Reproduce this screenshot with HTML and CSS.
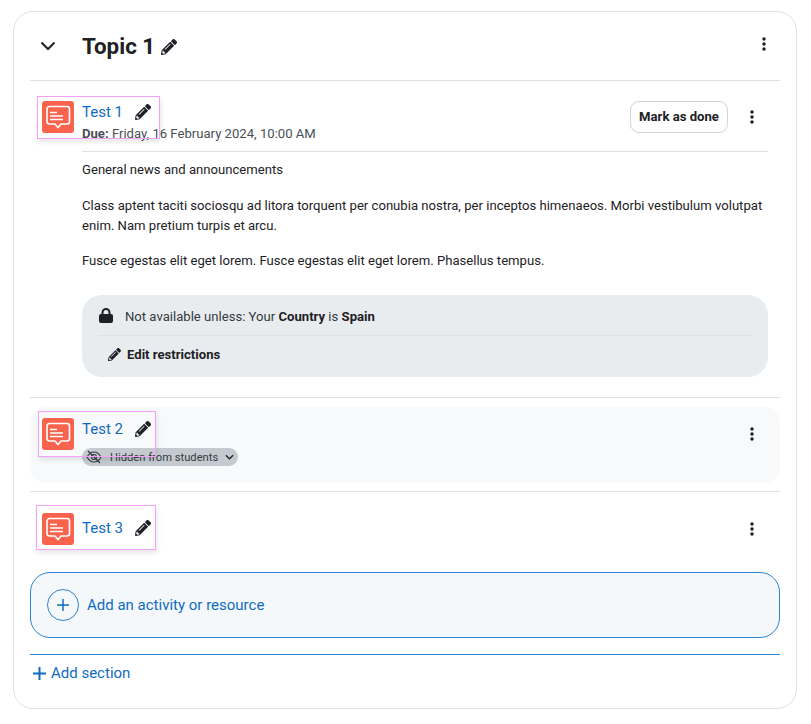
FILE: index.html
```html
<!DOCTYPE html>
<html lang="en">
<head>
<meta charset="utf-8">
<title>Topic 1</title>
<link rel="stylesheet" href="styles.css">
</head>
<body>
<svg class="defs" width="0" height="0" aria-hidden="true">
  <defs>
    <symbol id="pencil" viewBox="0 0 512 512"><path d="M497.9 142.1l-46.1 46.1c-4.7 4.7-12.3 4.7-17 0l-111-111c-4.7-4.7-4.7-12.3 0-17l46.1-46.1c18.7-18.7 49.1-18.7 67.900 0l60.100 60.100c18.800 18.700 18.800 49.100 0 67.900zM284.200 99.800L21.600 362.400.400 483.900c-2.900 16.400 11.400 30.600 27.800 27.800l121.500-21.300 262.600-262.600c4.700-4.700 4.700-12.300 0-17l-111-111c-4.800-4.700-12.400-4.700-17.100 0zM124.100 339.900c-5.500-5.500-5.500-14.300 0-19.800l154-154c5.500-5.500 14.300-5.500 19.800 0s5.500 14.300 0 19.800l-154 154c-5.500 5.500-14.300 5.500-19.800 0zM88 424h48v36.300l-64.500 11.300-31.100-31.100L51.700 376H88v48z"/></symbol>
    <symbol id="dots" viewBox="0 0 4 14"><circle cx="2" cy="2" r="1.75"/><circle cx="2" cy="7" r="1.75"/><circle cx="2" cy="12" r="1.75"/></symbol>
    <symbol id="forum" viewBox="0 0 32 32"><rect width="32" height="32" rx="3" fill="#f7634d"/><path d="M7.500 5.500h17.500a2.500 2.500 0 0 1 2.500 2.500v12.500a2.500 2.500 0 0 1-2.500 2.500h-6l-3 3.500-3-3.500H7.500A2.500 2.500 0 0 1 5 20.500V8a2.500 2.500 0 0 1 2.500-2.500z" fill="none" stroke="#fff" stroke-width="1.600"/><path d="M8 11.500h7M8 15h13M8 18.500h13" stroke="#fff" stroke-width="1.400" fill="none"/></symbol>
  </defs>
</svg>
<main class="card">
  <header class="section-head">
    <svg class="chevron" viewBox="0 0 16 10"><path d="M1.500 1.500 8 8l6.500-6.500" fill="none" stroke="#1d2125" stroke-width="2"/></svg>
    <h2 class="section-title">Topic 1</h2>
    <svg class="icon title-pencil"><use href="#pencil"/></svg>
    <button class="kebab head-kebab" aria-label="Section actions"><svg><use href="#dots"/></svg></button>
  </header>

  <section class="activity first">
    <div class="activity-top">
      <svg class="activity-icon"><use href="#forum"/></svg>
      <div class="activity-main">
        <div class="activity-name"><a href="#">Test 1</a><svg class="icon name-pencil"><use href="#pencil"/></svg></div>
        <p class="due"><b>Due:</b> Friday, 16 February 2024, 10:00 AM</p>
      </div>
      <button class="done">Mark as done</button>
      <button class="kebab" aria-label="Activity actions"><svg><use href="#dots"/></svg></button>
      <span class="highlight h1"></span>
    </div>
    <div class="description">
      <p>General news and announcements</p>
      <p>Class aptent taciti sociosqu ad litora torquent per conubia nostra, per inceptos himenaeos. Morbi vestibulum volutpat enim. Nam pretium turpis et arcu.</p>
      <p>Fusce egestas elit eget lorem. Fusce egestas elit eget lorem. Phasellus tempus.</p>
    </div>
    <div class="restrictions">
      <div class="restriction-line">
        <svg class="lock" viewBox="0 0 14 15"><path d="M3.500 6.500V4.500a3.500 3.500 0 0 1 7 0v2" fill="none" stroke="#1d2125" stroke-width="2"/><rect y="6" width="14" height="9" rx="2" fill="#1d2125"/></svg>
        <span>Not available unless: Your <b>Country</b> is <b>Spain</b></span>
      </div>
      <div class="restriction-edit"><svg class="icon edit-pencil"><use href="#pencil"/></svg><b>Edit restrictions</b></div>
    </div>
  </section>

  <section class="activity hidden-item">
    <div class="activity-top">
      <svg class="activity-icon"><use href="#forum"/></svg>
      <div class="activity-main">
        <div class="activity-name"><a href="#">Test 2</a><svg class="icon name-pencil"><use href="#pencil"/></svg></div>
        <span class="badge">
          <svg class="eye" viewBox="0 0 16 14"><path d="M1 7c2-3.500 4.500-5 7-5s5 1.500 7 5c-2 3.500-4.500 5-7 5S3 10.500 1 7z" fill="none" stroke="#343a40" stroke-width="1.100"/><circle cx="8" cy="7" r="2.500" fill="none" stroke="#343a40" stroke-width="1.100"/><path d="M2 1l12 12" stroke="#343a40" stroke-width="1.200"/></svg>
          <span class="badge-text">Hidden from students</span>
          <svg class="badge-caret" viewBox="0 0 10 6"><path d="M1 1l4 4 4-4" fill="none" stroke="#1d2125" stroke-width="1.500"/></svg>
        </span>
      </div>
      <button class="kebab" aria-label="Activity actions"><svg><use href="#dots"/></svg></button>
      <span class="highlight h2"></span>
    </div>
  </section>

  <section class="activity third">
    <div class="activity-top">
      <svg class="activity-icon"><use href="#forum"/></svg>
      <div class="activity-main">
        <div class="activity-name"><a href="#">Test 3</a><svg class="icon name-pencil"><use href="#pencil"/></svg></div>
      </div>
      <button class="kebab" aria-label="Activity actions"><svg><use href="#dots"/></svg></button>
      <span class="highlight h3"></span>
    </div>
  </section>

  <a class="add-activity" href="#">
    <span class="add-circle"><svg viewBox="0 0 12 12"><path d="M6 0v12M0 6h12" stroke="#0f6cbf" stroke-width="1.500"/></svg></span>
    <span>Add an activity or resource</span>
  </a>
  <a class="add-section" href="#"><svg viewBox="0 0 13 13"><path d="M6.500 0v13M0 6.500h13" stroke="#0f6cbf" stroke-width="2"/></svg><span>Add section</span></a>
</main>
</body>
</html>
```
FILE: styles.css
```css
* { box-sizing: border-box; }
html, body { margin: 0; background: #fff; }
body { padding: 11px 14px 15px 13px; font-family: Roboto, "Liberation Sans", sans-serif; font-size: 13.125px; line-height: 20px; color: #1d2125; }
.defs { position: absolute; }
.card { height: 698px; border: 1px solid #dee2e6; border-radius: 20px; padding: 0 16px; }
a { color: #0f6cbf; text-decoration: none; }
p { margin: 0; }
button { font-family: inherit; background: none; border: 0; padding: 0; color: inherit; }
.section-head { height: 69px; display: flex; align-items: center; border-bottom: 1px solid #dee2e6; }
.chevron { width: 16px; height: 10px; margin-left: 10px; flex: none; }
.section-title { margin: 0 0 0 26px; font-size: 22.400px; line-height: 30px; font-weight: 700; }
.icon { fill: #1d2125; flex: none; }
.title-pencil { width: 16px; height: 16px; margin-left: 6px; margin-top: 2px; }
.kebab { width: 24px; height: 24px; display: flex; align-items: center; justify-content: center; flex: none; }
.kebab svg { width: 4px; height: 14px; fill: #1d2125; }
.head-kebab { margin-left: auto; margin-right: 4px; margin-top: -4px; }
.activity-top { position: relative; display: flex; align-items: flex-start; }
.activity-icon { width: 32px; height: 32px; flex: none; margin-left: 12px; }
.activity-main { flex: 1; min-width: 0; margin-left: 8px; }
.activity-name { display: flex; align-items: center; font-size: 15px; line-height: 22px; }
.name-pencil { width: 16px; height: 16px; margin-left: 12px; }
.first { height: 317px; padding-top: 20px; border-bottom: 1px solid #dee2e6; }
.first .activity-top { padding-right: 16px; }
.first .kebab { margin-left: 12px; margin-top: 4px; }
.due { color: #495057; line-height: 18px; margin-top: 2px; padding-bottom: 6px; }
.done { width: 98px; height: 32px; padding-bottom: 2px; border: 1px solid #ced4da; border-radius: 9px; font-size: 13.125px; font-weight: 700; background: #fff; margin-left: 12px; }
.description { margin: 2px 12px 0 52px; padding-top: 8px; border-top: 1px solid #dee2e6; }
.description p { margin-bottom: 15px; }
.description p:first-child { margin-bottom: 16px; }
.restrictions { margin: 24px 12px 0 52px; height: 82px; background: #e9ecef; border-radius: 20px; padding: 0 16px; }
.restriction-line { display: flex; align-items: center; height: 41px; padding-top: 3px; border-bottom: 1px solid #dee2e6; color: #343a40; }
.lock { width: 14px; height: 15px; margin: -3px 12px 0 1px; flex: none; }
.restriction-line b { color: #1d2125; }
.restriction-edit { display: flex; align-items: center; height: 37px; margin-left: 10px; }
.edit-pencil { width: 13px; height: 13px; margin-right: 6px; }
.hidden-item { margin-top: 9px; height: 76px; background: #f8f9fa; border-radius: 16px; padding-top: 11px; }
.hidden-item .kebab { margin-right: 16px; margin-top: 4px; }
.badge { display: inline-flex; align-items: center; height: 18px; margin-top: 8px; padding: 0 4px; background: #c4cad0; border-radius: 9px; font-size: 11.200px; color: #343a40; }
.badge-text { padding-top: 2px; }
.eye { width: 16px; height: 14px; margin-right: 8px; }
.badge-caret { width: 9px; height: 6px; margin-left: 7px; }
.third { margin-top: 8px; padding-top: 21px; height: 66px; border-top: 1px solid #dee2e6; }
.third .activity-main { padding-top: 4px; }
.third .kebab { margin-right: 16px; margin-top: 4px; }
.highlight { position: absolute; border: 1px solid #f7a0f7; box-shadow: 1px 3px 5px rgba(0,0,0,.1); pointer-events: none; }
.h1 { left: 7px; top: -5px; width: 123px; height: 43px; }
.h2 { left: 8px; top: -7px; width: 118px; height: 46px; }
.h3 { left: 6px; top: -8px; width: 120px; height: 45px; }
.add-activity { display: flex; align-items: center; height: 66px; margin-top: 15px; padding-left: 16px; background: #f5f8fb; border: 1px solid #2c83cf; border-radius: 20px; font-size: 15px; }
.add-circle { width: 32px; height: 32px; border: 1px solid #2c83cf; border-radius: 50%; display: flex; align-items: center; justify-content: center; margin-right: 8px; flex: none; }
.add-circle svg { width: 12px; height: 12px; }
.add-section { display: flex; align-items: center; height: 37px; margin-top: 16px; border-top: 1px solid #2c83cf; padding-left: 3px; font-size: 15px; }
.add-section svg { width: 13px; height: 13px; margin-right: 5px; }
```
